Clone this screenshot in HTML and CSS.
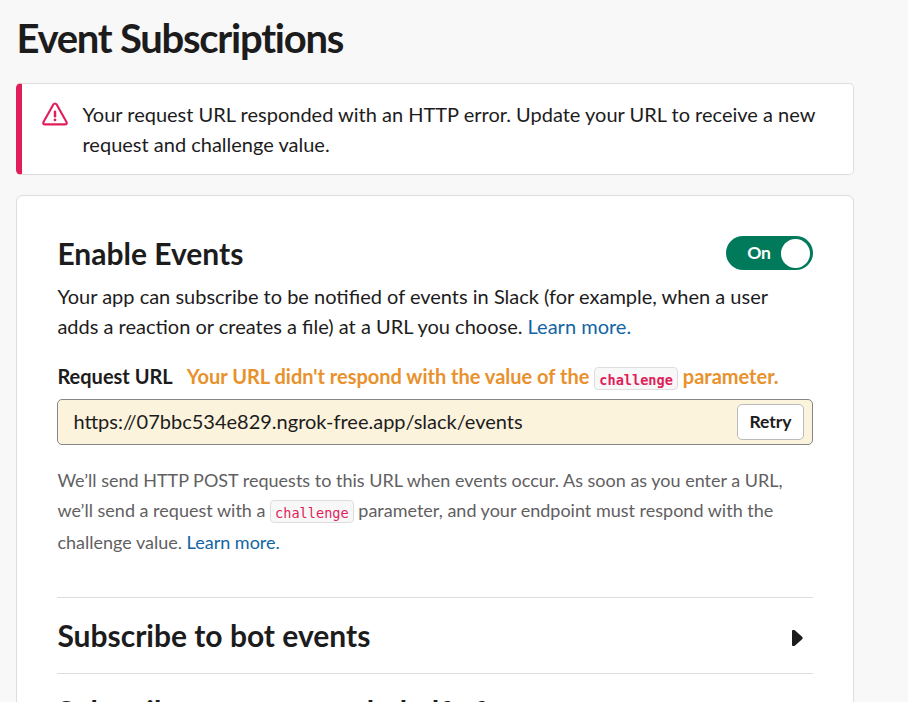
FILE: index.html
```html
<!DOCTYPE html>
<html lang="en">
<head>
<meta charset="utf-8">
<title>Event Subscriptions</title>
<link rel="stylesheet" href="styles.css">
</head>
<body>
<main class="page">
  <h1 class="page-title">Event Subscriptions</h1>
  <div class="alert">
    <svg class="alert-icon" viewBox="0 0 26 24" width="26" height="24" fill="none" stroke="#e01e5a" stroke-width="2.1" stroke-linejoin="round" stroke-linecap="round">
      <path d="M11.2 2.7 1.5 20.1Q.7 22.4 3 22.4H23Q25.3 22.4 24.5 20.1L14.8 2.7Q13 .4 11.2 2.7Z"/>
      <path d="M13 9.8V14.2" stroke-width="2.5"/>
      <path d="M13 17.8V17.9" stroke-width="2.8"/>
    </svg>
    <p class="alert-text">Your request URL responded with an HTTP error. Update your URL to receive a new request and challenge value.</p>
  </div>
  <section class="card">
    <div class="card-head">
      <h2 class="heading">Enable Events</h2>
      <div class="toggle"><span class="toggle-label">On</span><span class="toggle-knob"></span></div>
    </div>
    <p class="intro">Your app can subscribe to be notified of events in Slack (for example, when a user adds a reaction or creates a file) at a URL you choose. <a href="#">Learn more.</a></p>
    <div class="label"><span class="label-name">Request URL</span><span class="warning">Your URL didn't respond with the value of the <code>challenge</code> parameter.</span></div>
    <div class="url-field"><span class="url">https://07bbc534e829.ngrok-free.app/slack/events</span><button class="retry">Retry</button></div>
    <div class="help">
      <p class="help-line">We’ll send HTTP POST requests to this URL when events occur. As soon as you enter a URL,</p>
      <p class="help-line">we’ll send a request with a <code>challenge</code> parameter, and your endpoint must respond with the</p>
      <p class="help-line help-last">challenge value. <a href="#">Learn more.</a></p>
    </div>
    <div class="accordion">
      <h2 class="heading">Subscribe to bot events</h2>
      <svg class="caret" viewBox="0 0 11 16" width="11" height="16"><path d="M0 1Q0 0 1 0H2.5L10.4 7Q11 8 10.4 9L2.5 16H1Q0 16 0 15Z" fill="#1d1c1d"/></svg>
    </div>
    <div class="accordion">
      <h2 class="heading">Subscribe to events on behalf of users</h2>
    </div>
  </section>
</main>
</body>
</html>
```

FILE: styles.css
```css
* { box-sizing: border-box; }
body {
  margin: 0;
  height: 702px;
  overflow: hidden;
  background: #f8f8f8;
  color: #1d1c1d;
  font-family: Lato, sans-serif;
  font-size: 20px;
  line-height: 30px;
}
h1, h2, p { margin: 0; }
a { color: #1264a3; text-decoration: none; }
.page { width: 838px; height: 702px; overflow: hidden; margin-left: 16px; padding-top: 13px; }
.page-title {
  font-size: 40px;
  line-height: 50px;
  letter-spacing: -1.25px;
  font-weight: 700;
  margin: 0 0 20px .4px;
}
.alert {
  display: flex;
  height: 92px;
  padding: 15px 30px 0 20px;
  background: #fff;
  border: 1px solid #ddd;
  border-left: 6px solid #e01e5a;
  border-radius: 5px;
}
.alert-icon { flex: none; margin: 3px 14.5px 0 0; }
.card {
  height: 600px;
  margin-top: 20px;
  padding: 40px 40px 0;
  background: #fff;
  border: 1px solid #ddd;
  border-radius: 7px;
  box-shadow: 0 1px 3px rgba(0, 0, 0, .06);
}
.card-head {
  display: flex;
  justify-content: space-between;
  align-items: center;
  height: 34px;
  margin-bottom: 11px;
}
.heading { padding-left: .4px; font-size: 30px; line-height: 36px; font-weight: 700; }
.toggle {
  display: flex;
  align-items: center;
  justify-content: flex-end;
  gap: 10px;
  width: 87px;
  height: 34px;
  padding-right: 3px;
  border-radius: 17px;
  background: #007a5a;
}
.toggle-label { padding-bottom: 1px; color: #fff; font-size: 17.5px; font-weight: 700; }
.toggle-knob { width: 29px; height: 29px; border-radius: 50%; background: #fff; }
.intro { margin-bottom: 20px; padding-left: .4px; }
.label { display: flex; height: 30px; padding-left: .4px; font-weight: 700; white-space: nowrap; }
.label-name { margin-right: 14px; }
.warning { color: #e8912d; }
code {
  display: inline-block;
  height: 23px;
  padding: 3px 4px 0;
  border: 1px solid #ddd;
  border-radius: 4px;
  background: #f8f8f8;
  color: #e01e5a;
  font-family: "DejaVu Sans Mono", monospace;
  font-size: 13.6px;
  line-height: 19px;
  vertical-align: -1px;
}
.url-field {
  display: flex;
  align-items: center;
  justify-content: space-between;
  height: 46px;
  margin: 8px 0 20px;
  padding: 0 8px 0 15.4px;
  background: #fbf3dc;
  border: 1px solid #868686;
  border-radius: 5px;
}
.url { padding-bottom: 2px; }
.retry {
  width: 67px;
  height: 36px;
  padding: 0 0 1px;
  background: #fff;
  border: 1px solid #bbb;
  border-radius: 5px;
  color: #1d1c1d;
  font: 700 17.5px Lato, sans-serif;
}
.help { margin-bottom: 40px; padding-left: .4px; color: #616061; font-size: 18px; }
.help-line { height: 30px; white-space: nowrap; }
.help-last { margin-top: 2px; }
.accordion {
  display: flex;
  align-items: center;
  justify-content: space-between;
  height: 76px;
  padding: 0 10px 2px 0;
  border-top: 1px solid #ddd;
}
.caret { margin-top: 7px; }
```
